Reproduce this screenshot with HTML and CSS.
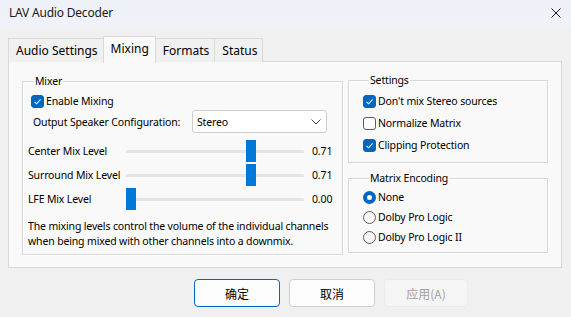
FILE: index.html
```html
<!DOCTYPE html>
<html>
<head>
<meta charset="utf-8">
<link rel="stylesheet" href="styles.css">
</head>
<body>
<div class="window">
  <div class="titlebar">
    <span class="title">LAV Audio Decoder</span>
    <svg class="close" width="10" height="10" viewBox="0 0 10 10"><path d="M0.5 0.5 L9.5 9.5 M9.5 0.5 L0.5 9.5" stroke="#1b1b1b" stroke-width="1"/></svg>
  </div>
  <div class="tabs">
    <div class="tab">Audio Settings</div>
    <div class="tab active">Mixing</div>
    <div class="tab">Formats</div>
    <div class="tab">Status</div>
  </div>
  <div class="panel">
    <fieldset class="group mixer">
      <legend>Mixer</legend>
      <label class="check enable"><span class="box on"><svg width="13" height="13" viewBox="0 0 13 13"><path d="M3.5 6.8 L5.6 8.8 L9.6 4.4" fill="none" stroke="#fff" stroke-width="1.1"/></svg></span>Enable Mixing</label>
      <div class="speaker">
        <span class="speaker-label">Output Speaker Configuration:</span>
        <div class="combo"><span>Stereo</span><svg width="10" height="6" viewBox="0 0 10 6"><path d="M0.5 0.5 L5 5 L9.5 0.5" fill="none" stroke="#444" stroke-width="1"/></svg></div>
      </div>
      <div class="sliders">
        <div class="slider-row">
          <span class="s-label">Center Mix Level</span>
          <div class="track"><div class="thumb" style="left:120px"></div></div>
          <span class="s-value">0.71</span>
        </div>
        <div class="slider-row">
          <span class="s-label">Surround Mix Level</span>
          <div class="track"><div class="thumb" style="left:120px"></div></div>
          <span class="s-value">0.71</span>
        </div>
        <div class="slider-row">
          <span class="s-label">LFE Mix Level</span>
          <div class="track"><div class="thumb" style="left:0px"></div></div>
          <span class="s-value">0.00</span>
        </div>
      </div>
      <p class="desc">The mixing levels control the volume of the individual channels<br>when being mixed with other channels into a downmix.</p>
    </fieldset>
    <div class="right-col">
      <fieldset class="group settings">
        <legend>Settings</legend>
        <label class="check"><span class="box on"><svg width="13" height="13" viewBox="0 0 13 13"><path d="M3.5 6.8 L5.6 8.8 L9.6 4.4" fill="none" stroke="#fff" stroke-width="1.1"/></svg></span>Don't mix Stereo sources</label>
        <label class="check"><span class="box"></span>Normalize Matrix</label>
        <label class="check"><span class="box on"><svg width="13" height="13" viewBox="0 0 13 13"><path d="M3.5 6.8 L5.6 8.8 L9.6 4.4" fill="none" stroke="#fff" stroke-width="1.1"/></svg></span>Clipping Protection</label>
      </fieldset>
      <fieldset class="group matrix">
        <legend>Matrix Encoding</legend>
        <label class="radio"><span class="dot on"></span>None</label>
        <label class="radio"><span class="dot"></span>Dolby Pro Logic</label>
        <label class="radio"><span class="dot"></span>Dolby Pro Logic II</label>
      </fieldset>
    </div>
  </div>
  <div class="buttons">
    <div class="btn default">确定</div>
    <div class="btn">取消</div>
    <div class="btn disabled">应用(A)</div>
  </div>
</div>
</body>
</html>
```

FILE: styles.css
```css
* { box-sizing: border-box; }
html, body { margin: 0; padding: 0; }
body {
  width: 571px;
  height: 317px;
  overflow: hidden;
  background: #f0f0f0;
  font-family: "Noto Sans", "Noto Sans CJK SC", sans-serif;
  font-size: 10.5px;
  letter-spacing: -0.15px;
  color: #000;
}
.window { width: 571px; height: 317px; display: flex; flex-direction: column; }
.titlebar {
  height: 30px;
  flex: none;
  display: flex;
  align-items: center;
  justify-content: space-between;
  padding: 0 10px 6px 9px;
  background: linear-gradient(#eef2f8, #eff3f9 80%, #f0f0f0);
  font-size: 12px;
  letter-spacing: -0.2px;
  color: #1a1a1a;
}
.close { margin-top: 2px; }
.tabs {
  display: flex;
  align-items: flex-end;
  height: 31px;
  padding: 5px 0 0 8px;
  flex: none;
  position: relative;
  z-index: 1;
}
.tab {
  height: 24px;
  padding: 0 5px 0 7px;
  display: flex;
  align-items: center;
  border: 1px solid #d9d9d9;
  border-bottom: none;
  background: #f0f0f0;
  font-size: 12px;
  letter-spacing: 0;
  margin-bottom: -1px;
}
.tab + .tab { margin-left: -1px; }
.tab.active {
  height: 27px;
  padding: 0 6px 4px 7px;
  background: #f9f9f9;
  margin-bottom: -2px;
  position: relative;
  z-index: 2;
}
.panel {
  margin: 0 9px 0 8px;
  height: 207px;
  flex: none;
  border: 1px solid #d9d9d9;
  background: #f9f9f9;
  display: flex;
  align-items: flex-start;
  padding: 11px 0 0 13px;
  gap: 5px;
}
.group {
  margin: 0;
  padding: 0;
  border: 1px solid #d8d8d8;
  box-shadow: inset 1px 1px 0 #fff, 1px 1px 0 #fff;
  min-width: 0;
}
.group legend {
  margin-left: 6px;
  padding: 0 1px;
  line-height: 16px;
}
.mixer { width: 321px; height: 182px; padding: 2px 0 0 5px; }
.check, .radio {
  display: flex;
  align-items: center;
  height: 22px;
  white-space: nowrap;
}
.box {
  width: 13px; height: 13px;
  border: 1px solid #5d5d5d;
  border-radius: 3px;
  background: #fdfdfd;
  margin-right: 2px;
  flex: none;
  display: flex;
}
.box.on { background: #0067c0; border-color: #0067c0; }
.box svg { margin: -1px; }
.enable { margin-left: 3px; height: 20px; }
.speaker {
  display: flex;
  align-items: center;
  height: 23px;
  margin: -1px 0 0 5px;
  white-space: nowrap;
}
.speaker-label { width: 159px; }
.combo {
  width: 135px;
  height: 23px;
  border: 1px solid #cccccc;
  border-radius: 3px;
  background: #fff;
  display: flex;
  align-items: center;
  justify-content: space-between;
  padding: 0 5px 0 4px;
}
.sliders { margin-top: 6px; }
.slider-row {
  display: flex;
  align-items: center;
  height: 24px;
  white-space: nowrap;
}
.s-label { width: 98px; }
.track {
  width: 178px;
  height: 3px;
  background: #e4e4e4;
  border-radius: 2px;
  position: relative;
  margin-right: 8px;
}
.thumb {
  position: absolute;
  top: -10px;
  width: 10px;
  height: 22px;
  background: #0078d7;
}
.desc {
  margin: 8px 0 0 0;
  line-height: 15px;
  white-space: nowrap;
}
.right-col { display: flex; flex-direction: column; gap: 7px; margin-top: -1px; }
.settings { width: 200px; height: 91px; padding: 2px 0 0 14px; }
.matrix { width: 200px; height: 83px; padding: 1px 0 0 14px; }
.radio { height: 20px; }
.dot {
  width: 13px; height: 13px;
  border-radius: 50%;
  border: 1px solid #5d5d5d;
  background: #f7f7f7;
  margin-right: 2px;
  flex: none;
}
.dot.on { border: 4px solid #0067c0; background: #fff; }
.buttons {
  display: flex;
  gap: 9px;
  padding: 11px 0 0 194px;
}
.btn {
  width: 86px;
  height: 28px;
  border: 1px solid #d0d0d0;
  border-radius: 4px;
  background: #fdfdfd;
  display: flex;
  align-items: center;
  justify-content: center;
  font-family: "Noto Sans CJK SC", sans-serif;
  font-size: 12px;
  letter-spacing: 0;
}
.btn.default { border-color: #0067c0; }
.btn.disabled { width: 84px; background: #f5f5f5; border-color: #ebebeb; color: #a0a0a0; }
```
